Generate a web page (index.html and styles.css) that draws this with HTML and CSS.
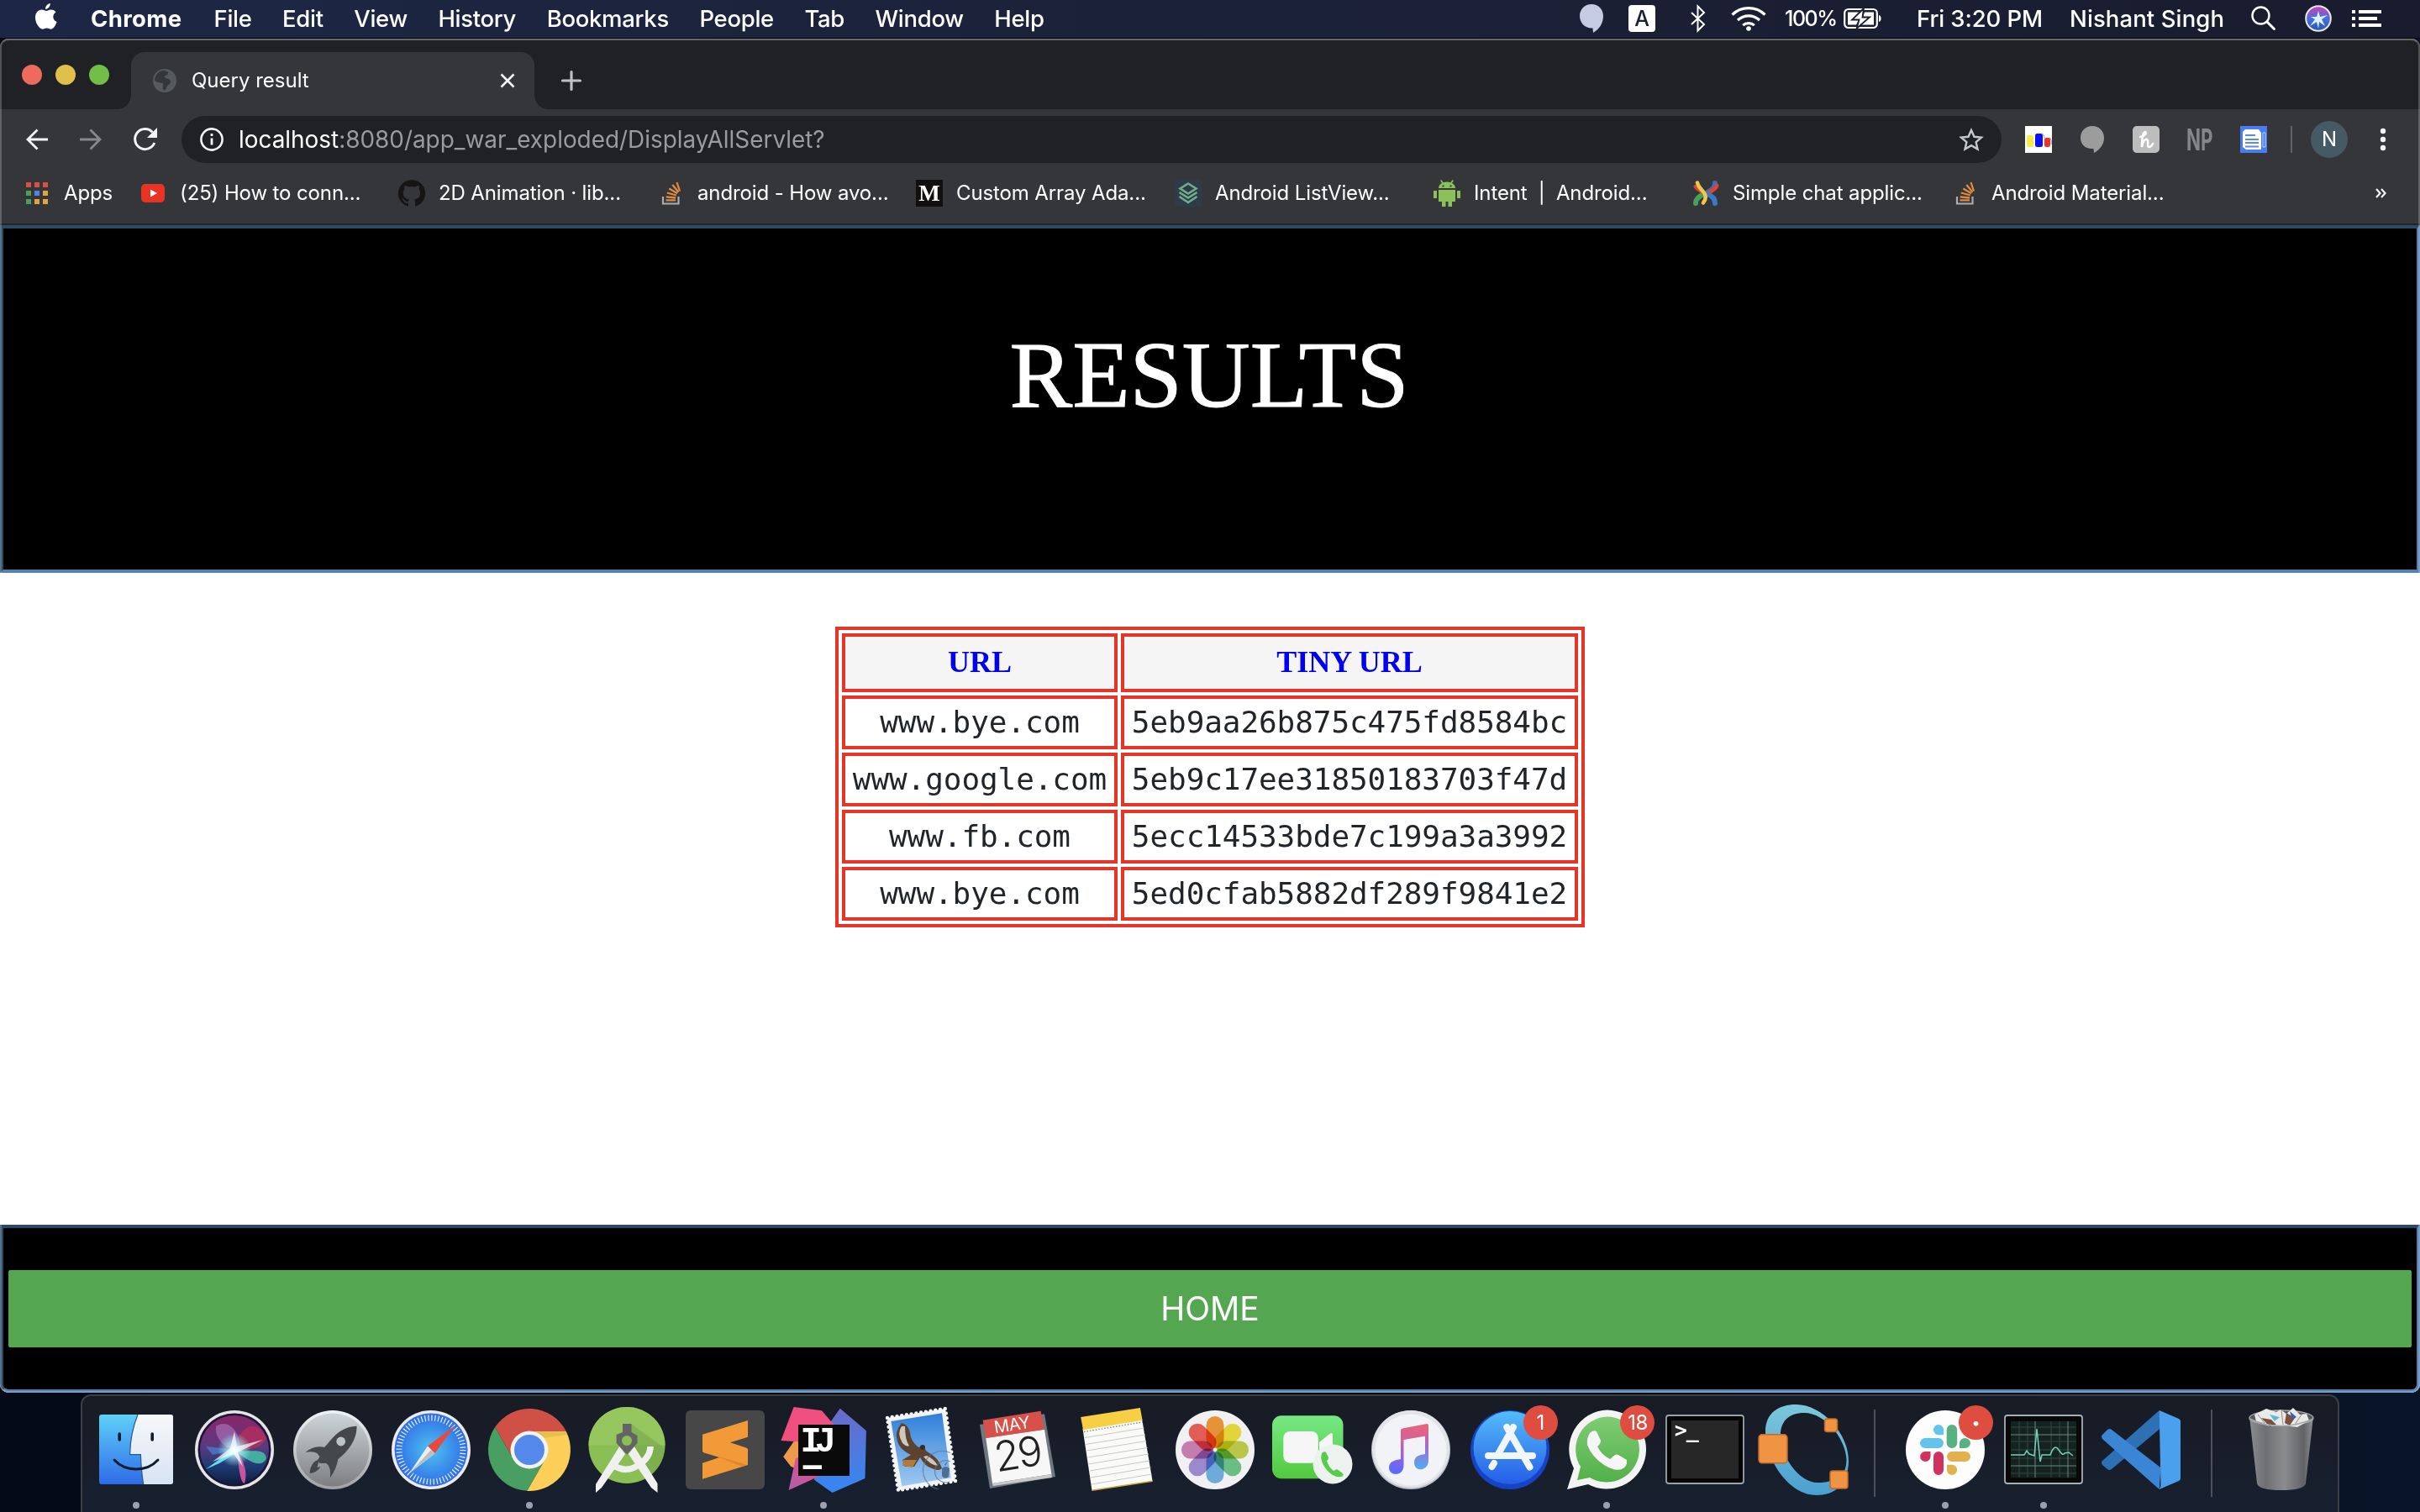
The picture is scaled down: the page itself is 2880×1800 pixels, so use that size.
FILE: index.html
```html
<!DOCTYPE html>
<html lang="en">
<head>
<meta charset="utf-8">
<title>Query result</title>
<link rel="stylesheet" href="styles.css">
</head>
<body>
<div class="desktop">

<header class="menubar">
  <svg class="apple" width="26" height="32" viewBox="0 0 26 32" fill="#fff"><path d="M17.800 0c.3 3.400-2.600 6.900-5.700 6.800C11.700 3.600 14.800.3 17.800 0zM13.300 9c1.300 0 2.900-1.500 5.500-1.500 2.300 0 4.500 1.200 5.700 3.100-4.700 2.700-4.100 9.400 1.100 11.500C24.300 26 21.600 30.700 18.700 30.700c-2 0-2.800-1.200-5-1.200-2.300 0-3.100 1.200-5 1.200C5 30.700 0 23.700 0 17.100 0 11.200 3.600 7.700 7.500 7.600 9.900 7.600 12 9 13.300 9z"/></svg>
  <nav class="menus">
    <b>Chrome</b><span>File</span><span>Edit</span><span>View</span><span>History</span><span>Bookmarks</span><span>People</span><span>Tab</span><span>Window</span><span>Help</span>
  </nav>
  <div class="status">
    <svg width="28" height="34" viewBox="0 0 28 34"><path d="M14 0c8 0 14 6 14 14 0 9-5 16-12 20l-.5-5.500C6 29 0 22 0 14 0 6 6 0 14 0z" fill="#c5cbe0"/></svg>
    <span class="input-src">A</span>
    <svg class="bt" width="20" height="32" viewBox="0 0 20 32" fill="none" stroke="#fff" stroke-width="2"><path d="M2 9l15 14-7.500 7.500V1.500L17 9 2 23"/></svg>
    <svg class="wifi" width="42" height="30" viewBox="0 0 42 30" fill="none" stroke="#fff" stroke-width="3.200"><path d="M1.500 10.500a28 28 0 0 1 39 0M8 17a19 19 0 0 1 26 0M14.200 23.200a10 10 0 0 1 13.600 0"/><circle cx="21" cy="27" r="2.800" fill="#fff" stroke="none"/></svg>
    <span class="percent">100%</span>
    <svg class="battery" width="46" height="26" viewBox="0 0 46 26"><rect x="1.200" y="2" width="38.600" height="22" rx="4.500" fill="none" stroke="#fff" stroke-width="2.200"/><path d="M42 9c3.500.5 3.500 7.500 0 8z" fill="#fff"/><path d="M5 5.500h16L10 15h8l-3 5.500H5zM25 5.500h11v15H19.500L32 11.500h-9z" fill="#fff"/><path d="M24 1L10 14.500h8.500L15.500 25 31 11.500h-8.500z" fill="#fff" stroke="#1a1f30" stroke-width="1.800"/></svg>
    <span class="clock">Fri 3:20 PM</span>
    <span class="user">Nishant Singh</span>
    <svg class="spot" width="30" height="29" viewBox="0 0 30 29" fill="none" stroke="#fff"><circle cx="11.500" cy="11.500" r="10" stroke-width="2.400"/><path d="M19 19l8.500 8.500" stroke-width="3" stroke-linecap="round"/></svg>
    <svg class="siri-s" width="32" height="32" viewBox="-16 -16 32 32"><defs><linearGradient id="ss" x1="0" y1="0" x2="0" y2="1"><stop offset="0" stop-color="#d33fae"/><stop offset=".5" stop-color="#4a6fe0"/><stop offset="1" stop-color="#2a55a8"/></linearGradient></defs><circle r="14.800" fill="url(#ss)" stroke="#e8e8f0" stroke-width="2"/><path d="M0-9L2-2l9-2-7 5 4 8-7-5-1 8-2-8-8 5 6-8-5-3 7 0z" fill="#d8f4ff"/></svg>
    <svg class="list" width="35" height="20" viewBox="0 0 35 20" fill="#fff"><path d="M0 0h4v4H0zM8 0h27v4H8zM0 8h4v4H0zM8 8h22v4H8zM0 16h4v4H0zM8 16h27v4H8z"/></svg>
  </div>
</header>

<main class="window">
  <div class="tabstrip">
    <div class="lights"><i class="red"></i><i class="yellow"></i><i class="green"></i></div>
    <div class="tab">
      <svg class="globe" width="28" height="28" viewBox="0 0 28 28"><circle cx="14" cy="14" r="14" fill="#56595d"/><path d="M12 2c3 0 7 1 6 4-1 2-5 1-4 4 2 2 6 1 7 5 0 4-5 4-5 8-1 3-3 3-4 1-1-3 2-5-1-7-4-1-8-1-9-4C3 7 6 3 12 2z" fill="#35363a"/></svg>
      <span class="tab-title">Query result</span>
      <svg width="18" height="18" viewBox="0 0 18 18" stroke="#f1f3f4" stroke-width="2.600"><path d="M1.500 1.500l15 15M16.500 1.500l-15 15"/></svg>
    </div>
    <svg class="newtab" width="24" height="24" viewBox="0 0 24 24" stroke="#bdc1c6" stroke-width="3.200" stroke-linecap="round"><path d="M12 1.500v21M1.500 12h21"/></svg>
  </div>

  <div class="toolbar">
    <div class="nav">
      <svg width="26" height="26" viewBox="0 0 26 26" fill="none" stroke="#f1f3f4" stroke-width="2.800"><path d="M26 13H2.500M13.500 1.500L2 13l11.500 11.500"/></svg>
      <svg width="26" height="26" viewBox="0 0 26 26" fill="none" stroke="#86888b" stroke-width="2.800"><path d="M0 13h23.500M12.500 1.500L24 13 12.500 24.500"/></svg>
      <svg width="28" height="28" viewBox="0 0 28 28"><path d="M24.800 18A12 12 0 1 1 22.500 5.500" fill="none" stroke="#f1f3f4" stroke-width="3"/><path d="M28 0v12H16z" fill="#f1f3f4"/></svg>
    </div>
    <div class="omnibox">
      <svg class="info" width="28" height="28" viewBox="0 0 28 28"><circle cx="14" cy="14" r="12.600" fill="none" stroke="#f1f3f4" stroke-width="2.600"/><path d="M12.600 12.500h2.800v8h-2.800zM12.600 7h2.800v3h-2.800z" fill="#f1f3f4"/></svg>
      <span class="url"><em>localhost</em>:8080/app_war_exploded/DisplayAllServlet?</span>
      <svg class="star" width="30" height="28" viewBox="0 0 30 28" fill="none" stroke="#c5c8cc" stroke-width="2.400"><path d="M15 3l3.500 7.800 8.500.8-6.400 5.600 1.900 8.300L15 21.100l-7.500 4.400 1.900-8.300L3 11.600l8.500-.8z"/></svg>
    </div>
    <div class="exts">
      <svg width="32" height="32" viewBox="0 0 32 32"><path fill="#fff" d="M0 0h32v32H0z"/><rect x="2" y="11" width="8" height="14" rx="2.500" fill="#fbea4d"/><rect x="12" y="9" width="9" height="16" rx="2.500" fill="#0a12f5"/><rect x="23" y="14" width="7" height="11" rx="2.500" fill="#e8352a"/><path d="M19 9q4 0 4 6M29 14q3 1 2 8" fill="none" stroke="#999"/></svg>
      <svg class="bub" width="28" height="32" viewBox="0 0 28 32"><path d="M14 0c8 0 14 6 14 14 0 8-5 14-12 18l-.5-5C6 28 0 22 0 14 0 6 6 0 14 0z" fill="#9c9c9c"/></svg>
      <svg width="32" height="32" viewBox="0 0 32 32"><rect width="32" height="32" rx="5" fill="#bdbdbd"/><path d="M9 13c6-1 8-5 6-6-3 0-4 9-4 18 1-7 4-10 6-9 3 2-1 9 3 9 2 0 3-2 4-4" fill="none" stroke="#fff" stroke-width="2.600" stroke-linecap="round"/></svg>
      <span class="np">NP</span>
      <svg width="32" height="32" viewBox="0 0 32 32"><path fill="#4a7cf0" d="M0 0h32v32H0z"/><path d="M6 4h16l3 4v20H7l-4-3V7z" fill="#fff"/><path d="M6 11h12M6 16h16M6 20h16M6 24.500h16" stroke="#5a8be8" stroke-width="1.800"/><path d="M27 8h3v17h-3z" fill="none" stroke="#bcd0ff"/></svg>
      <i class="vline"></i>
      <span class="avatar">N</span>
      <svg class="kebab" width="8" height="28" viewBox="0 0 8 28" fill="#f1f3f4"><circle cx="4" cy="4" r="3.200"/><circle cx="4" cy="14" r="3.200"/><circle cx="4" cy="24" r="3.200"/></svg>
    </div>
  </div>

  <div class="bookmarks">
    <div class="bm apps"><svg width="32" height="32" viewBox="0 0 32 32"><path fill="#d9503f" d="M3 3h6v6H3zM13 3h6v6h-6zM23 3h6v6h-6z"/><path fill="#4c9f5a" d="M3 13h6v6H3zM3 23h6v6H3z"/><path fill="#4a86ee" d="M13 13h6v6h-6z"/><path fill="#e2a53d" d="M23 13h6v6h-6zM13 23h6v6h-6zM23 23h6v6h-6z"/></svg><span>Apps</span></div>
    <div class="bm"><svg width="32" height="32" viewBox="0 0 32 32"><rect x="2" y="5" width="28" height="22" rx="5" fill="#e93323"/><path d="M13 11.500l8 4.500-8 4.500z" fill="#fff"/></svg><span>(25) How to conn...</span></div>
    <div class="bm"><svg width="32" height="32" viewBox="0 0 32 32"><path fill="#161514" fill-rule="evenodd" d="M16 .3a16 16 0 0 0-5.100 31.200c.8.100 1.100-.3 1.100-.8v-3c-4.400 1-5.400-1.900-5.400-1.900-.7-1.800-1.800-2.300-1.800-2.300-1.400-1 .1-1 .1-1 1.600.1 2.500 1.700 2.500 1.700 1.400 2.400 3.700 1.700 4.700 1.300.1-1 .5-1.700 1-2.100-3.600-.4-7.300-1.800-7.300-7.900 0-1.700.6-3.200 1.600-4.300-.1-.4-.7-2 .2-4.200 0 0 1.300-.4 4.400 1.600a15 15 0 0 1 8 0c3-2 4.400-1.600 4.400-1.600.9 2.200.3 3.800.2 4.200 1 1.100 1.600 2.600 1.600 4.300 0 6.100-3.700 7.500-7.300 7.900.6.500 1.100 1.500 1.100 3v4.300c0 .5.300.9 1.100.8A16 16 0 0 0 16 .3z"/></svg><span>2D Animation · lib...</span></div>
    <div class="bm"><svg class="so" width="32" height="32" viewBox="0 0 32 32" fill="none"><path d="M6 20v8.500h18.500V20" stroke="#a9adb1" stroke-width="2.200"/><path d="M9.500 24.300h11.500M9.700 20.300l11.400 1.200M10.800 15.500l11 3M13.300 10.500l9.800 5.800M17.300 6l7.200 8.800M22.500 3l3.500 10.500" stroke="#e08a3f" stroke-width="2.300"/></svg><span>android - How avo...</span></div>
    <div class="bm"><span class="medium">M</span><span>Custom Array Ada...</span></div>
    <div class="bm"><svg width="32" height="32" viewBox="0 0 32 32"><path fill="#2f3b49" d="M0 0h32v32H0z"/><g fill="none" stroke="#6fae88" stroke-width="2.600"><path d="M16 4.500l9.500 6L16 16.500l-9.500-6z"/><path d="M5.500 15L16 21.500 26.500 15M5.500 20L16 27l10.500-7"/></g></svg><span>Android ListView...</span></div>
    <div class="bm"><svg width="32" height="32" viewBox="0 0 32 32" fill="#8bc05a"><path d="M6 10c0-3 2-5 4-6L8 .8 9.500.2 11.700 3.300a12 12 0 0 1 8.600 0L22.500.2l1.500.6L22 4c2 1 4 3 4 6zM6 12h20v14H6zM0 13h4v9H0zM28 13h4v9h-4zM10 26h4.500v6H10zM17.500 26H22v6h-4.500z"/><path fill="#35363a" d="M10.500 6.500h2v2h-2zM19.500 6.500h2v2h-2z"/></svg><span class="pre">Intent  |  Android...</span></div>
    <div class="bm"><svg width="32" height="32" viewBox="0 0 32 32" fill="none" stroke-linecap="round" stroke-width="6"><path d="M27 4c0 6-4 8-9 11" stroke="#3d6fb5"/><path d="M29 7c-1 4-6 6-9 8" stroke="#d9453a" stroke-width="5"/><path d="M3.500 8c2 4 7 5 10 8" stroke="#d9453a" stroke-width="4"/><path d="M4 28c0-6 5-9 10-11" stroke="#4c9f5a"/><path d="M18 17c6 2 9 5 9 11" stroke="#3d78c8"/><path d="M6 3.500c1 5 5 8 8 12s2 8-1 12" stroke="#efc84a" stroke-width="4.500"/></svg><span>Simple chat applic...</span></div>
    <div class="bm"><svg class="so" width="32" height="32" viewBox="0 0 32 32" fill="none"><path d="M6 20v8.500h18.500V20" stroke="#a9adb1" stroke-width="2.200"/><path d="M9.500 24.300h11.500M9.700 20.300l11.400 1.200M10.800 15.500l11 3M13.300 10.500l9.800 5.800M17.300 6l7.200 8.800M22.500 3l3.500 10.500" stroke="#e08a3f" stroke-width="2.300"/></svg><span>Android Material...</span></div>
    <svg class="more" width="13" height="12" viewBox="0 0 13 12" fill="none" stroke="#f1f3f4" stroke-width="2.200"><path d="M1 1l4.500 5L1 11M7 1l4.500 5L7 11"/></svg>
  </div>

  <section class="hero"><h1>RESULTS</h1></section>

  <section class="content">
    <table>
      <tr><th class="c1">URL</th><th class="c2">TINY URL</th></tr>
      <tr><td>www.bye.com</td><td>5eb9aa26b875c475fd8584bc</td></tr>
      <tr><td>www.google.com</td><td>5eb9c17ee31850183703f47d</td></tr>
      <tr><td>www.fb.com</td><td>5ecc14533bde7c199a3a3992</td></tr>
      <tr><td>www.bye.com</td><td>5ed0cfab5882df289f9841e2</td></tr>
    </table>
  </section>

  <section class="foot"><button class="home">HOME</button></section>
</main>

<footer class="dock">
  <!-- Finder -->
  <div class="app run"><svg viewBox="-55 -55 110 110"><defs><linearGradient id="fi" x1="0" y1="0" x2="0" y2="1"><stop offset="0" stop-color="#5fd0f8"/><stop offset="1" stop-color="#2f6be8"/></linearGradient><linearGradient id="fw" x1="0" y1="0" x2="0" y2="1"><stop offset="0" stop-color="#f6f7f9"/><stop offset="1" stop-color="#d8e4f4"/></linearGradient></defs><rect x="-44" y="-42" width="88" height="83" rx="3" fill="url(#fi)"/><path d="M2-42H41q3 0 3 3V38q0 3-3 3H8.700Q6 25 5.400 5.700H-7.400Q-7-20 2-42z" fill="url(#fw)"/><path d="M2-42Q-7-20-7.400 5.700H5.400Q6 25 8.700 41" fill="none" stroke="#28588e" stroke-width="1.200"/><path d="M-19.800-19v7M19.200-19v7" stroke="#111c2e" stroke-width="3.600" stroke-linecap="round"/><path d="M-26 12Q-16 23 0 23T26 12" fill="none" stroke="#111c2e" stroke-width="3" stroke-linecap="round"/></svg></div>
  <!-- Siri -->
  <div class="app"><svg viewBox="-55 -55 110 110"><defs><radialGradient id="s1"><stop offset="0" stop-color="#fff"/><stop offset=".35" stop-color="#b9f0f5" stop-opacity=".8"/><stop offset="1" stop-color="#7ff" stop-opacity="0"/></radialGradient><linearGradient id="s2" x1="0" y1="0" x2="0" y2="1"><stop offset="0" stop-color="#8a2566"/><stop offset=".45" stop-color="#5a3a80"/><stop offset=".75" stop-color="#1d3a72"/><stop offset="1" stop-color="#101c3c"/></linearGradient></defs><circle r="47" fill="#e4e4e6"/><circle r="43.500" fill="#1a1436"/><circle r="41" fill="url(#s2)"/><path d="M0-6C10-30 26-38 38-14 34-4 20 2 0 0z" fill="#c22c58" opacity=".7"/><path d="M-22-28C-8-38 8-22 6 0-10 2-24-14-22-28z" fill="#b57fc9" opacity=".55"/><path d="M0 0C18 4 36-4 38 10 32 24 14 12 0 0z" fill="#49d3ae" opacity=".75"/><path d="M2 0C12 14 16 28 12 40 6 38 6 20 2 0z" fill="#e85aa8" opacity=".85"/><path d="M0-2L-34 23-18 16 2 4z" fill="#5fe0f0"/><path d="M0 0L-34-4-26 6z" fill="#4a8fe0" opacity=".6"/><circle r="20" fill="url(#s1)"/><path d="M0-22L3-4 34-12 4 3 10 20-1 5-26 14-5-2z" fill="#fff" opacity=".7"/></svg></div>
  <!-- Launchpad -->
  <div class="app"><svg viewBox="-55 -55 110 110"><defs><linearGradient id="lp" x1="0" y1="0" x2="0" y2="1"><stop offset="0" stop-color="#cdd6da"/><stop offset="1" stop-color="#7e7e80"/></linearGradient><linearGradient id="lr" x1="0" y1="0" x2="0" y2="1"><stop offset="0" stop-color="#eef5f8"/><stop offset="1" stop-color="#a0a1a3"/></linearGradient></defs><circle r="47" fill="url(#lr)"/><circle r="43.500" fill="url(#lp)"/><path d="M28.500-28.300C16-28 6-22-3-11q-4 5-7 8-12-3-22.600 6 8-2 14 1l3 4-2 4 2 4 4 0 4 0q6 5 4.500 17 7-9 9.500-22C18 2 29-12 28.500-28.300z" fill="#45484b"/><circle cx="9.700" cy="-10" r="5.400" fill="#bcc4c8"/><path d="M-16 11q-11 4-11.500 17 9-1 13-8l-4 1z" fill="#45484b"/></svg></div>
  <!-- Safari -->
  <div class="app"><svg viewBox="-55 -55 110 110"><defs><radialGradient id="sf"><stop offset="0" stop-color="#4fc3ef"/><stop offset="1" stop-color="#2f6ce8"/></radialGradient></defs><circle r="47" fill="#ebebeb"/><circle r="43.500" fill="url(#sf)"/><circle r="38" fill="none" stroke="#e5f2ff" stroke-width="7" stroke-dasharray="1.200 2.780"/><path d="M28.700-29.300L4.500 4.300-4-4.500z" fill="#e8493f"/><path d="M-26 28L-4-4.500 4.500 4.300z" fill="#eceff2"/><path d="M-26 28L0 0l4.500 4.300z" fill="#b9bfc6"/></svg></div>
  <!-- Chrome -->
  <div class="app run"><svg viewBox="-55 -55 110 110"><path d="M43.800-22A49 49 0 0 0-40.900-26.900L-19.050 11A22 22 0 0 1 0-22z" fill="#cf5044"/><path transform="rotate(-120)" d="M43.800-22A49 49 0 0 0-40.900-26.900L-19.050 11A22 22 0 0 1 0-22z" fill="#489f61"/><path transform="rotate(120)" d="M43.800-22A49 49 0 0 0-40.900-26.900L-19.050 11A22 22 0 0 1 0-22z" fill="#fbcf58"/><path d="M0-22h43.800l1.500 4L16-14z" fill="#b08a30" opacity=".25"/><circle r="22.500" fill="#f3f3f3"/><circle r="18" fill="#5488ea"/></svg></div>
  <!-- Android Studio -->
  <div class="app"><svg viewBox="-55 -55 110 110"><circle cy="-5.500" r="45.500" fill="#8abf54"/><path d="M-45.500-5.500a45.500 45.500 0 0 1 91 0z" fill="#96c65e"/><path d="M5-31L45-2A46 46 0 0 1 30 29L0-4z" fill="#6f9f45" opacity=".5"/><path d="M-18 17Q-2 29 14 18 28 9 28-4" fill="none" stroke="#f0f0f0" stroke-width="7.500"/><path d="M-8.800-4L-37 41V51L-30 45-2 5zM8.800-4L36.500 40V51L29 45 2 5z" fill="#f0f0f0"/><path d="M-5-31H5.500v10l7 4V-8L5 0 0 5.700-5 0-12.400-8v-10l7.400-3z" fill="#636466"/><circle cy="-11" r="6" fill="#8abf54"/></svg></div>
  <!-- Sublime Text -->
  <div class="app"><svg viewBox="-55 -55 110 110"><rect x="-47" y="-47" width="94" height="94" rx="6" fill="#474747"/><path d="M27-35V-15.300L5.900-8.700 25-2.500Q28-1 27 2V18L-27 34.700V15.700L-7 9-25 3.500Q-27 3-27 1V-18.300z" fill="#f29a38"/><path d="M-7 9L-24 3.500 27 18 20 20z" fill="#d07d28" opacity=".6"/></svg></div>
  <!-- IntelliJ IDEA -->
  <div class="app run"><svg viewBox="-55 -55 110 110"><defs><linearGradient id="ib" x1="0" y1="0" x2="0" y2="1"><stop offset="0" stop-color="#6a6bc8"/><stop offset="1" stop-color="#3388f5"/></linearGradient><linearGradient id="ip" x1="1" y1="0" x2="0" y2="1"><stop offset="0" stop-color="#f0468a"/><stop offset="1" stop-color="#b060a8"/></linearGradient></defs><path d="M19.700-49.300L50.900-22.700 49.500 34 10.500 51-11 35.700-8-10z" fill="url(#ib)"/><path d="M-34-12L-47.800 8.300-38.600 20-28 24V-12z" fill="#ee9a4b"/><path d="M-33 10L-41.400 48-4.200 31V0z" fill="url(#ip)"/><path d="M-35.400-51L-2-46.700 14-28-20-9-50.600-11z" fill="#ee4f7f"/><rect x="-30" y="-30" width="61" height="61" fill="#0a0a0a"/><path d="M-24.400 18.300H-2V23H-24.400z" fill="#fff"/></svg><span class="ij">IJ</span></div>
  <!-- Mail -->
  <div class="app"><svg viewBox="-55 -55 110 110"><defs><linearGradient id="ma" x1="0" y1="0" x2="0" y2="1"><stop offset="0" stop-color="#2f7fdb"/><stop offset="1" stop-color="#9fc9f0"/></linearGradient></defs><path d="M-41-38L28-49 40 37-28 48z" fill="#f4f5f6" stroke="#f4f5f6" stroke-width="4.500" stroke-dasharray="0 5.800" stroke-linecap="round"/><path d="M-36.600-34L24-43.700 34.500 33.300-23.800 43.300z" fill="url(#ma)"/><path d="M-24-32Q-33-22-29-10-26 0-13 6L-23 12-20 20-9 20-2 9Q4 20 12 22q8 4 12 0Q20 9 6 2L1-5-4-3Q-13-10-14-20-16-30-24-32z" fill="#5b4332"/><path d="M-24-28Q-30-20-23-8-18-3-15-5-20-12-20-28zM2 8q8 10 17 11-4-8-13-12z" fill="#cfc8bc"/><path d="M-22 12l-1 7 12 2 5-9z" fill="#b5793e"/><circle cx="1" cy="-3" r="3" fill="#3a2a20"/><g fill="none" stroke="#5b7696" stroke-width="1.200" opacity=".7"><path d="M34 3.500A23 23 0 1 0 20 47"/><path d="M34 14A13 13 0 1 0 33 38"/></g><path d="M24 22q4-4 9 0l-1 10q-5 4-8-1zM28 19l3-5-4 3z" fill="#4d6f96"/></svg></div>
  <!-- Calendar -->
  <div class="app cal"><svg viewBox="-55 -55 110 110"><path d="M-45-30L32-42.700 45 32-33 46z" fill="#6e7880"/><path d="M-37.700-14L32-24.300 40.400 29-30 40z" fill="#f7f7f7"/><path d="M-30 40L40.400 29 41 33-29.500 43z" fill="#c9c9c9"/><path d="M-41.400-35.300L27.500-46.300 32-24.300-37.700-14z" fill="#d8504a"/></svg><span class="cal-m">MAY</span><span class="cal-d">29</span></div>
  <!-- Notes -->
  <div class="app notes"><svg viewBox="-55 -55 110 110"><path d="M-40.500-25L30-37 42.600 37.300-29.500 48.300z" fill="#fafaf8"/><path d="M-29.500 48.300L42.600 37.300" stroke="#c9a93a" stroke-width="1.500"/><path d="M-42.800-39L27.900-50 30.600-35.300-40-23.700z" fill="#f7cf45"/><path d="M-39-21.500L31-33" stroke="#8a8a80" stroke-width="1.400" stroke-dasharray="1.500 2"/><path d="M-38-14.500L32.500-26M-37-6.500L34-18M-35.500 1L35-10.500M-34.500 9L36.500-2.500M-33.500 17L38 5M-32 25L39 13M-31 33L40.500 21M-30 41L41.500 29" stroke="#c9cac8" stroke-width="1.100"/></svg></div>
  <!-- Photos -->
  <div class="app notes"><svg viewBox="-55 -55 110 110"><circle r="47" fill="#f1f1f3"/><g class="petals"><rect x="-10.500" y="-40" width="21" height="38" rx="10.500" fill="#f39c38"/><rect x="-10.500" y="-40" width="21" height="38" rx="10.500" fill="#efe23c" transform="rotate(45)"/><rect x="-10.500" y="-40" width="21" height="38" rx="10.500" fill="#c3d34c" transform="rotate(90)"/><rect x="-10.500" y="-40" width="21" height="38" rx="10.500" fill="#72c78c" transform="rotate(135)"/><rect x="-10.500" y="-40" width="21" height="38" rx="10.500" fill="#74b5e6" transform="rotate(180)"/><rect x="-10.500" y="-40" width="21" height="38" rx="10.500" fill="#a591d6" transform="rotate(225)"/><rect x="-10.500" y="-40" width="21" height="38" rx="10.500" fill="#d183b8" transform="rotate(270)"/><rect x="-10.500" y="-40" width="21" height="38" rx="10.500" fill="#f0625a" transform="rotate(315)"/></g></svg></div>
  <!-- FaceTime -->
  <div class="app mid"><svg viewBox="-55 -55 110 110"><defs><linearGradient id="ft" x1="0" y1="0" x2="0" y2="1"><stop offset="0" stop-color="#76e983"/><stop offset="1" stop-color="#52c93f"/></linearGradient></defs><rect x="-48" y="-40.700" width="84.500" height="75" rx="11" fill="url(#ft)"/><rect x="-34.700" y="-22" width="41.500" height="37.700" rx="8" fill="#f6f6f6"/><path d="M8-9L21-19.500q3-1.500 3 1.500V14L8 3z" fill="#f6f6f6"/><circle cx="24" cy="17" r="23.500" fill="#eef2ee"/><path d="M11 4q3-3 5-1l3 6q0 3-2 4 2 7 8 12l4-2 7 5q2 3-2 4-8 2-17-8-9-11-6-20z" fill="#55cc4c"/></svg></div>
  <!-- Music -->
  <div class="app mid"><svg viewBox="-55 -55 110 110"><defs><linearGradient id="mu" gradientUnits="userSpaceOnUse" x1="10" y1="-30" x2="0" y2="28"><stop offset="0" stop-color="#e8647e"/><stop offset=".35" stop-color="#d2619a"/><stop offset=".75" stop-color="#8b62ec"/><stop offset="1" stop-color="#5b6cf5"/></linearGradient><linearGradient id="mv" gradientUnits="userSpaceOnUse" x1="0" y1="-30" x2="0" y2="22"><stop offset="0" stop-color="#e5607a"/><stop offset=".5" stop-color="#a66bd0"/><stop offset="1" stop-color="#50aaf5"/></linearGradient></defs><circle r="47" fill="#bcc0c8"/><circle r="46" cy="-1" fill="#e2e4e8"/><circle r="42.500" fill="#f2f3f6"/><path d="M-12-23q0-2 2-2.500L19-31q2 0 2 2v12L-8.500-12V18C-8 32-26 32-26 21-26 13-17 12-12 11z" fill="url(#mu)"/><path d="M17-17l4-2v31C21 26 4 27 4 15 4 7 11 6 17 5z" fill="url(#mv)"/></svg></div>
  <!-- App Store -->
  <div class="app notes"><svg viewBox="-55 -55 110 110"><defs><linearGradient id="as" x1="0" y1="0" x2="0" y2="1"><stop offset="0" stop-color="#54bcf8"/><stop offset="1" stop-color="#245ee8"/></linearGradient></defs><circle r="47" fill="#1545c6"/><circle r="43.500" cy="-2.500" fill="url(#as)"/><g stroke="#f1f6fc" stroke-width="8" stroke-linecap="round"><path d="M4-27L-14 5M-26 7H27M-19 16l-2.500 4M-3.800-27L23.500 20.500"/></g></svg><span class="badge">1</span></div>
  <!-- WhatsApp -->
  <div class="app run mid"><svg viewBox="-55 -55 110 110"><defs><linearGradient id="wa" x1="0" y1="0" x2="0" y2="1"><stop offset="0" stop-color="#7fcc74"/><stop offset="1" stop-color="#52b048"/></linearGradient></defs><path d="M1-47.500A47 47 0 1 1-22 41L-47 47-39 22A47 47 0 0 1 1-47.500z" fill="#f4f4f4"/><path d="M1-39.500A39 39 0 1 1-20 33L-35 36-31 20A39 39 0 0 1 1-39.500z" fill="url(#wa)"/><path d="M-20-20q4-4 8-2l5 11q0 4-4 7 5 10 15 15l6-5q2-1 4 0l10 6q1 8-6 11-8 3-21-5-15-10-20-24-1-8 3-14z" fill="#f6f6f6"/></svg><span class="badge">18</span></div>
  <!-- Terminal -->
  <div class="app mid"><svg viewBox="-55 -55 110 110"><rect x="-46" y="-41" width="92" height="81" rx="3" fill="#050505" stroke="#9aa5a8" stroke-width="1.800"/><rect x="-40" y="-35" width="80" height="69" fill="#272727"/></svg><span class="prompt">&gt;_</span></div>
  <!-- Octave -->
  <div class="app notes"><svg viewBox="-55 -55 110 110"><defs><linearGradient id="oc" x1="0" y1="0" x2="0" y2="1"><stop offset="0" stop-color="#7cc7dc"/><stop offset="1" stop-color="#4a9fd0"/></linearGradient></defs><path d="M-9.500-54C22-54 54-18 53 14 52 40 38 54 14.800 54-18 54-46 12-46-22-46-44-30-54-9.500-54zM0-44C-18-44-28-34-28-18-28 8-6 39 16 39 36 39 50.500 32 50.500 12 50-12 26-44 0-44z" fill="url(#oc)" fill-rule="evenodd"/><g fill="#ef9443" stroke="#c46a28" stroke-width="1.500"><rect x="-54" y="-18.200" width="34" height="34" rx="4"/><rect x="24.500" y="-37" width="15" height="15.500" rx="3"/><rect x="31" y="25" width="21" height="21" rx="3"/></g></svg></div>
  <i class="sep"></i>
  <!-- Slack -->
  <div class="app run"><svg viewBox="-55 -55 110 110"><circle r="47" fill="#fdfdfd"/><path d="M-2-17.700h-6a6 6.200 0 1 1 6-6.200zM-24-14h16a6 6 0 0 1 0 12h-16a6 6 0 0 1 0-12z" fill="#64c3ec"/><path d="M1.700-24a6.200 6 0 0 1 12.500 0V-8a6.200 6 0 0 1-12.500 0zM17-2v-6a6.500 6 0 1 1 6.500 6z" fill="#57b183"/><path d="M-17.500 2v6a6.200 6 0 1 1-6.500-6zM-14 8a6 6 0 0 1 12 0V24a6 6 0 0 1-12 0z" fill="#cf325f"/><path d="M8 2H24a6 6 0 0 1 0 12H8A6 6 0 0 1 8 2zM2 17.700h6a6 6.200 0 1 1-6 6.200z" fill="#e3b14b"/></svg><span class="badge dot">•</span></div>
  <!-- Activity Monitor -->
  <div class="app run"><svg viewBox="-55 -55 110 110"><rect x="-46" y="-41" width="92" height="81" rx="3" fill="#080808" stroke="#a8b0b2" stroke-width="1.800"/><rect x="-39" y="-34" width="78" height="67" fill="#152320"/><path d="M-29-34v67M-19-34v67M9-34v67M19-34v67M-39-27H39M-39-10H39M-39 0H39M-39 10H39M-39 28H39" stroke="#30483f" stroke-width="1"/><path d="M-10-34v67M29-34v67M-39-18H39M-39 19H39" stroke="#6c877e" stroke-width="1"/><path d="M-39 6H-23l3-5 3 4 6 2 3-32L-4 14l2-8H8Q13-8 18 0t7 4l5-1 5 4" fill="none" stroke="#6fd3ba" stroke-width="1.500"/></svg></div>
  <!-- VS Code -->
  <div class="app"><svg viewBox="-55 -55 110 110"><path d="M21.700-47L23.500-26-35 23q-3 2-5 0L-46 18q-2-3 0-5z" fill="#2d71b5"/><path d="M-40-24q3-2 5 0L23.500 21.300 21.700 47-46-13q-2-3 0-5z" fill="#3a86d4"/><path d="M21.700-47L45-37q2 1 2 3v68q0 2-2 3L21.700 47l1.800-4z" fill="#4aa0ec"/></svg></div>
  <i class="sep"></i>
  <!-- Trash -->
  <div class="app"><svg viewBox="-55 -55 110 110"><defs><linearGradient id="tr"><stop offset="0" stop-color="#8b8d90"/><stop offset=".25" stop-color="#6d6f72"/><stop offset=".55" stop-color="#8a8c8e"/><stop offset=".85" stop-color="#606265"/><stop offset="1" stop-color="#909295"/></linearGradient></defs><path d="M-38-40Q0-26 38-40L29 40Q27 48 0 48T-29 40z" fill="url(#tr)"/><ellipse cy="-38" rx="38" ry="9" fill="#55575a" stroke="#a5a7a9" stroke-width="1.500"/><path d="M-32-42l14-7 12 4 5-3 7 5 8-7 8 8 8-1 3 8-14 8-17-2-16 1-16-6z" fill="#e9e9e7"/><path d="M-24-38l12 2 6 6-8 2zM6-44l10 6-6 9-6-3z" fill="#7d4f3e"/><path d="M-14-42l12 3-6 5z" fill="#58bcd4"/><path d="M10-46l8 7-5 3z" fill="#3a5fa8"/><path d="M-28-42l8 10M0-48l2 18M24-42l-8 12" stroke="#8c8c8c"/><path d="M-38-37Q0-20 38-37" fill="none" stroke="#a5a7a9" stroke-width="1.500"/></svg></div>
</footer>
</div>
</body>
</html>
```
FILE: styles.css
```css
* { box-sizing: border-box; }
body { margin: 0; font-family: Inter, "Liberation Sans", sans-serif; }
i, em { font-style: normal; }
svg { display: block; flex: none; overflow: visible; }

.desktop {
  width: 2880px; height: 1800px; overflow: hidden;
  display: flex; flex-direction: column; align-items: center;
  background: linear-gradient(90deg, #050a18, #020510 50%, #081528);
}

/* menu bar */
.menubar {
  width: 100%; height: 46px; flex: none;
  display: flex; align-items: center; padding: 0 46px 2px 42px;
  background: linear-gradient(90deg, #1d2745, #1b2138 50%, #191c2e);
  border-bottom: 1px solid #05070c;
  color: #fff; font-size: 27.5px; font-weight: 500; white-space: nowrap;
}
.apple { margin-top: -4px; }
.menus { display: flex; gap: 36.5px; margin-left: 40px; letter-spacing: -.3px; }
.menus b { width: 110px; font-weight: 700; letter-spacing: .35px; }
.status { margin-left: auto; display: flex; align-items: center; }
.input-src {
  width: 32px; height: 32px; margin-left: 30px; border-radius: 4px;
  background: #fff; color: #1a1f30; font-size: 25px; line-height: 32px; text-align: center;
}
.bt { margin-left: 41px; }
.wifi { margin-left: 29px; }
.percent { width: 62px; margin-left: 22px; font-size: 25px; letter-spacing: -1.5px; }
.battery { margin-left: 8px; }
.clock { width: 152px; margin-left: 41px; letter-spacing: -.1px; }
.user { width: 186px; margin-left: 30px; letter-spacing: .1px; }
.spot { margin-left: 30px; }
.siri-s { margin-left: 34px; }
.list { margin-left: 24px; }

/* browser window */
.window {
  position: relative; width: 100%; height: 1612px; flex: none;
  display: flex; flex-direction: column;
  background: #fff; border-radius: 10px; overflow: hidden;
}
.window::after {
  content: ""; position: absolute; inset: 0; border-radius: 10px;
  border: 2px solid rgba(255, 255, 255, .22); border-top-color: rgba(255, 255, 255, .32);
}
.tabstrip { height: 84px; flex: none; display: flex; background: #202124; padding-left: 26px; }
.lights { display: flex; gap: 16px; padding-top: 31px; width: 130px; }
.lights i { width: 24px; height: 24px; border-radius: 50%; }
.red { background: #ed6a5e; }
.yellow { background: #e0c04c; }
.green { background: #72be47; }
.tab {
  position: relative; width: 480px; height: 68px; margin-top: 16px; padding: 0 23px 1px 26px;
  display: flex; align-items: center;
  background: #35363a; border-radius: 16px 16px 0 0;
  color: #fff; font-size: 24px;
}
.tab::before, .tab::after {
  content: ""; position: absolute; bottom: 0; width: 16px; height: 16px;
}
.tab::before { left: -16px; background: radial-gradient(circle at 0 0, transparent 15.500px, #35363a 16px); }
.tab::after { right: -16px; background: radial-gradient(circle at 100% 0, transparent 15.500px, #35363a 16px); }
.tab-title { margin-left: 18px; flex: 1; }
.newtab { margin: 38px 0 0 32px; }

.toolbar { height: 72px; flex: none; display: flex; align-items: center; background: #35363a; padding: 0 40px 0 31px; }
.nav { display: flex; align-items: center; gap: 38px; width: 185px; }
.omnibox {
  width: 2166px; height: 56px; border-radius: 28px; padding: 0 21px 0 22px;
  display: flex; align-items: center; background: #202124;
}
.url { flex: 1; margin-left: 18px; font-size: 27.9px; color: #9a9b9d; }
.url em { color: #fff; }
.exts { display: flex; align-items: center; margin-left: 28px; }
.exts svg { margin-right: 32px; }
.exts .bub { margin: 0 34px 0 2px; }
.np { width: 34px; margin: 0 30px 0 0; font-size: 36px; line-height: 36px; color: #858688; transform: scaleX(.62); transform-origin: 0 50%; font-weight: 700; }
.exts .vline { width: 2px; height: 32px; background: #5f6165; margin-left: -4px; }
.avatar { width: 44px; height: 44px; margin: 0 38px 0 22px; border-radius: 50%; background: #455a64; color: #fff; font-size: 24px; line-height: 44px; text-align: center; }
.exts .kebab { margin: 0; }

.bookmarks {
  height: 66px; flex: none; display: flex; align-items: center;
  background: #35363a; border-bottom: 2px solid #232427; padding: 0 40px 9px 28px;
  color: #fff; font-size: 24px; letter-spacing: -.12px; white-space: nowrap;
}
.bm { width: 308px; flex: none; display: flex; align-items: center; gap: 16px; }
.bm.apps { width: 138px; }
.so { transform: translateX(1px); }
.pre { white-space: pre; }
.medium { width: 32px; height: 32px; background: #12100e; font: 700 27px/32px "Liberation Serif", serif; text-align: center; letter-spacing: 0; }
.more { margin-left: auto; }

/* page */
.hero {
  height: 414px; flex: none; padding-top: 107px; background: #000;
  border: 4px solid #5580b0; border-top-color: #2b4a66; border-left-color: #2b4a66;
}
.hero h1 { margin: 0 2px 0 0; color: #fff; font: 400 112px/134px "Liberation Serif", serif; text-align: center; -webkit-text-stroke: 1px #fff; }
.content { flex: 1; display: flex; justify-content: center; align-items: flex-start; padding-top: 64px; }
table { border: 4px solid #e63526; border-spacing: 4px; table-layout: fixed; width: 892px; }
th, td { border: 4px solid #e63526; padding: 0; text-align: center; white-space: nowrap; }
.c1 { width: 328px; }
.c2 { width: 544px; }
th { height: 70px; background: #f5f5f5; color: #0000ee; font: 700 36px/40px "Liberation Serif", serif; padding-bottom: 2px; }
td { height: 64px; color: #212529; font: 36px/42px "DejaVu Sans Mono", monospace; letter-spacing: -.08px; }
.foot {
  height: 200px; flex: none; padding: 50px 6px; background: #000; border-radius: 0 0 10px 10px;
  border: 4px solid #5580b0; border-top-color: #2b4a66; border-left-color: #2b4a66;
}
.home {
  display: block; width: 100%; height: 92px; padding: 0; border: 0; border-radius: 2px;
  background: #54a651; color: #fff; font: 400 39px/92px Inter, sans-serif;
}

/* dock */
.dock {
  width: 2688px; height: 150px; margin-top: 2px; flex: none; padding: 9px 0 0 6px;
  display: flex; align-items: flex-start;
  background: linear-gradient(#171b24, #182030);
  border: 2px solid #3b3e47; border-radius: 12px 12px 0 0;
}
.app { position: relative; width: 116.8px; height: 135px; flex: none; display: flex; flex-direction: column; align-items: center; color: #fff; }
.app svg { width: 110px; height: 110px; }
.run::after { content: ""; width: 8px; height: 8px; margin-top: 7px; border-radius: 50%; background: #9ba1ad; }
.cal { left: -3px; }
.notes { left: -1px; }
.mid { left: -2px; }
.sep { width: 2px; height: 104px; margin: 7px 24px 0; background: #4b505a; flex: none; }
.petals rect { mix-blend-mode: multiply; }
.badge {
  position: absolute; left: 74.500px; top: 2px; width: 41px; height: 41px; border-radius: 50%;
  background: #df4c40; font-size: 24px; line-height: 41px; text-align: center; letter-spacing: -.5px;
}
.badge.dot { font-size: 18px; }
.ij { position: absolute; left: 31px; top: 27px; font: 700 42px/38px "Liberation Mono", monospace; letter-spacing: -8px; }
.cal-m { position: absolute; left: 31px; top: 15px; font-size: 20px; line-height: 20px; transform: rotate(-9deg); letter-spacing: -.5px; }
.cal-d { position: absolute; left: 29px; top: 35px; width: 60px; font-size: 49px; line-height: 50px; font-weight: 300; letter-spacing: -2px; text-align: center; color: #222; transform: rotate(-9deg); }
.prompt { position: absolute; left: 22px; top: 18px; font: 700 25px/28px "DejaVu Sans Mono", monospace; letter-spacing: -1px; }
```
